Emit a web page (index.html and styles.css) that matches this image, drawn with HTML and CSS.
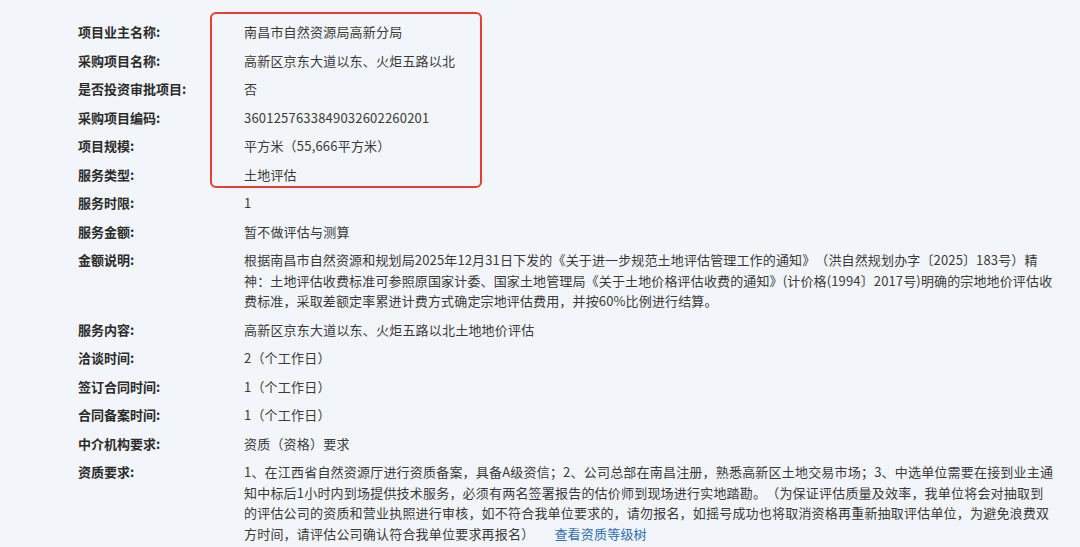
FILE: index.html
```html
<!DOCTYPE html>
<html lang="zh-CN">
<head>
    <meta charset="UTF-8">
    <meta name="viewport" content="width=device-width, initial-scale=1.0">
    <title>项目详情</title>
    <link rel="stylesheet" href="styles.css">
</head>
<body>
    <section class="detail">
        <!-- highlight frame around the first block of values -->
        <div class="mark-box"></div>

        <div class="row"><div class="label">项目业主名称:</div><div class="value">南昌市自然资源局高新分局</div></div>
        <div class="row"><div class="label">采购项目名称:</div><div class="value">高新区京东大道以东、火炬五路以北</div></div>
        <div class="row"><div class="label">是否投资审批项目:</div><div class="value">否</div></div>
        <div class="row"><div class="label">采购项目编码:</div><div class="value">3601257633849032602260201</div></div>
        <div class="row"><div class="label">项目规模:</div><div class="value">平方米（55,666平方米）</div></div>
        <div class="row"><div class="label">服务类型:</div><div class="value">土地评估</div></div>
        <div class="row"><div class="label">服务时限:</div><div class="value">1</div></div>
        <div class="row"><div class="label">服务金额:</div><div class="value">暂不做评估与测算</div></div>
        <div class="row"><div class="label">金额说明:</div><div class="value value-tight">根据南昌市自然资源和规划局2025年12月31日下发的《关于进一步规范土地评估管理工作的通知》（洪自然规划办字〔2025〕183号）精神：土地评估收费标准可参照原国家计委、国家土地管理局《关于土地价格评估收费的通知》(计价格(1994〕2017号)明确的宗地地价评估收费标准，采取差额定率累进计费方式确定宗地评估费用，并按60%比例进行结算。</div></div>
        <div class="row"><div class="label">服务内容:</div><div class="value">高新区京东大道以东、火炬五路以北土地地价评估</div></div>
        <div class="row"><div class="label">洽谈时间:</div><div class="value">2（个工作日）</div></div>
        <div class="row"><div class="label">签订合同时间:</div><div class="value">1（个工作日）</div></div>
        <div class="row"><div class="label">合同备案时间:</div><div class="value">1（个工作日）</div></div>
        <div class="row"><div class="label">中介机构要求:</div><div class="value">资质（资格）要求</div></div>
        <div class="row"><div class="label">资质要求:</div><div class="value">1、在江西省自然资源厅进行资质备案，具备A级资信；2、公司总部在南昌注册，熟悉高新区土地交易市场；3、中选单位需要在接到业主通知中标后1小时内到场提供技术服务，必须有两名签署报告的估价师到现场进行实地踏勘。（为保证评估质量及效率，我单位将会对抽取到的评估公司的资质和营业执照进行审核，如不符合我单位要求的，请勿报名，如摇号成功也将取消资格再重新抽取评估单位，为避免浪费双方时间，请评估公司确认符合我单位要求再报名）<a class="link" href="#">查看资质等级树</a></div></div>
    </section>
</body>
</html>
```

FILE: styles.css
```css
body {
    margin: 0;
    padding: 0;
    background-color: #f2f5f9;
    font-family: "Noto Sans CJK SC", "Liberation Sans", sans-serif;
    font-size: 13px;
    color: #3a3a3a;
}

.detail {
    position: relative;
    padding: 22px 20px 0 78px;
}

.row {
    display: flex;
    line-height: 20.5px;
    margin-bottom: 8px;
}

.label {
    flex: 0 0 166px;
    font-weight: 700;
    color: #2b2b2b;
}

.value {
    width: 812px;
    letter-spacing: 0.2px;
    text-spacing-trim: space-all;
}

.value-tight {
    letter-spacing: 0.14px;
}

.link {
    display: inline-block;
    color: #2d6db3;
    text-decoration: none;
    margin-left: 20px;
}

/* red annotation frame */
.mark-box {
    position: absolute;
    left: 210px;
    top: 12px;
    width: 268px;
    height: 172px;
    border: 2.5px solid #e5402b;
    border-radius: 6px;
}
```
